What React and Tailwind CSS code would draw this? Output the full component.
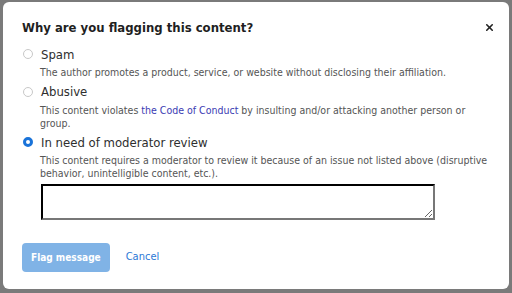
import { X } from 'lucide-react';

const options = [
  {
    id: 'spam',
    label: 'Spam',
    desc: 'The author promotes a product, service, or website without disclosing their affiliation.',
  },
  {
    id: 'abusive',
    label: 'Abusive',
    desc: (
      <>
        This content violates <a className="text-[#3b3bb3]">the Code of Conduct</a> by insulting and/or attacking another person or group.
      </>
    ),
  },
  {
    id: 'review',
    label: 'In need of moderator review',
    desc: 'This content requires a moderator to review it because of an issue not listed above (disruptive behavior, unintelligible content, etc.).',
  },
];

function Radio({ checked }) {
  return checked ? (
    <span className="w-[10px] h-[10px] rounded-full border-[3px] border-[#1a73d9] bg-white shrink-0" />
  ) : (
    <span className="w-[10px] h-[10px] rounded-full border border-[#c8c8c8] bg-white shrink-0" />
  );
}

export default function App() {
  return (
    <div
      className="w-[512px] h-[293px] bg-[#7a7a7a] pt-[2px] pl-[3px] pr-[3px] pb-[4px]"
      style={{ fontFamily: '"DejaVu Sans Condensed", "DejaVu Sans", Verdana, sans-serif' }}
    >
      <div className="h-full bg-white rounded-md pl-[19px] pr-[18px] pt-[16px] flex flex-col">
        <div className="flex items-center justify-between mr-[-4px]">
          <h2 className="text-[13px] font-bold text-[#1f1f1f]">Why are you flagging this content?</h2>
          <X className="w-[11px] h-[11px] text-[#222]" strokeWidth={3.5} />
        </div>

        <div className="mt-[7px] flex flex-col gap-[3px]">
          {options.map((o) => (
            <div key={o.id}>
              <div className="flex items-center gap-[8px] pl-[1px]">
                <Radio checked={o.id === 'review'} />
                <span className="text-[13px] text-[#2e2e2e]">{o.label}</span>
              </div>
              <p className="pl-[18px] text-[10.5px] leading-[13px] text-[#555] mt-[2px]">{o.desc}</p>
            </div>
          ))}
        </div>

        <div className="pl-[19px] mt-[4px]">
          <textarea className="w-[394px] h-[36px] border-2 border-t-black border-l-black border-b-[#777] border-r-[#777] outline-none resize block" />
        </div>

        <div className="mt-[23px] flex items-center gap-[16px]">
          <button className="h-[29px] px-[9px] rounded bg-[#80b3e6] text-white text-[10px] font-bold">Flag message</button>
          <button className="text-[11px] text-[#2b78d6]">Cancel</button>
        </div>
      </div>
    </div>
  );
}
